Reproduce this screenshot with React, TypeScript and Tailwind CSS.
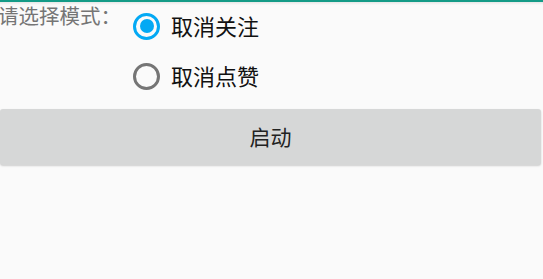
import { useState } from 'react';

const OPTIONS = ['取消关注', '取消点赞'];

function Radio({ checked }: { checked: boolean }) {
  return (
    <span
      className={
        checked
          ? 'flex h-[27px] w-[27px] shrink-0 items-center justify-center rounded-full border-[3px] border-[#03a9f4]'
          : 'flex h-[27px] w-[27px] shrink-0 items-center justify-center rounded-full border-[3px] border-[#757575]'
      }
    >
      {checked && <span className="h-[14px] w-[14px] rounded-full bg-[#03a9f4]" />}
    </span>
  );
}

export default function App() {
  const [mode, setMode] = useState(0);

  return (
    <div
      className="relative h-[279px] w-full overflow-hidden bg-[#fafafa]"
      style={{ fontFamily: '"Noto Sans CJK SC", "Noto Sans", Roboto, sans-serif' }}
    >
      {/* action bar edge */}
      <div className="h-[2px] bg-[#149b87]" />
      <div className="h-[3px] bg-gradient-to-b from-[#e6e6e6] to-[#fafafa]" />

      <div className="flex">
        <div className="ml-[-2px] mt-[-2px] w-[133px] shrink-0 text-[20.5px] leading-[24px] text-[#757575]">
          请选择模式：
        </div>
        <div className="mt-[-4px] flex flex-col">
          {OPTIONS.map((label, i) => (
            <button
              key={label}
              onClick={() => setMode(i)}
              className="flex h-[50px] items-center gap-[11px] pl-[2px] text-left"
            >
              <Radio checked={mode === i} />
              <span className="mt-[-3px] text-[22px] leading-[24px] text-[#111]">{label}</span>
            </button>
          ))}
        </div>
      </div>

      <div className="mt-[8px] flex">
        <button className="h-[56px] w-[541px] rounded-[3px] bg-[#d6d7d7] text-[21px] text-[#222] shadow-[0_1px_2px_rgba(0,0,0,0.18)]">
          启动
        </button>
      </div>
    </div>
  );
}
